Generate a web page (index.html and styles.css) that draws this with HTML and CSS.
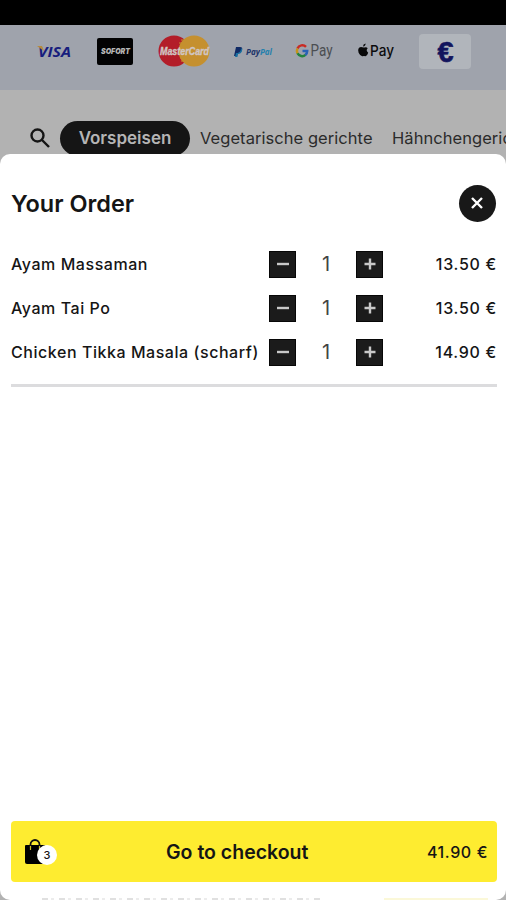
FILE: index.html
```html
<!DOCTYPE html>
<html lang="de">

<head>
    <meta charset="UTF-8">
    <meta name="viewport" content="width=device-width, initial-scale=1.0">
    <title>Your Order</title>
    <link rel="stylesheet" href="styles.css">
</head>

<body>
    <div class="status-bar"></div>

    <!-- Payment methods -->
    <div class="payments">
        <svg viewBox="0 0 506 65" width="506" height="65">
            <text class="visa" x="38" y="32" textLength="33" lengthAdjust="spacingAndGlyphs">VISA</text>
            <path d="M37 21h5l2 5z" fill="#b58a3c" />
            <rect x="97" y="13" width="36" height="27" rx="2" fill="#020203" />
            <text class="sofort" x="101" y="29" textLength="29" lengthAdjust="spacingAndGlyphs">SOFORT</text>
            <circle cx="174" cy="26" r="15.5" fill="#b31d29" />
            <circle cx="194" cy="26" r="15.5" fill="#c5902f" />
            <path d="M184 15h-3M184 18h-5M186 33h-6M185 36h-4" stroke="#c5902f" />
            <text class="master" x="160" y="30" textLength="49" lengthAdjust="spacingAndGlyphs">MasterCard</text>
            <path d="M236 22h4q3 0 2 3q-1 3-4 3l-1 3h-3z" fill="#102a65" />
            <path d="M241 23q2 1 1 3q-1 3-4 3l-.6 3h-2.400l1-4h2q3-1 3-5z" fill="#176fa0" />
            <text class="paypal" x="246" y="30" textLength="26" lengthAdjust="spacingAndGlyphs"><tspan fill="#203469">Pay</tspan><tspan fill="#2580ad">Pal</tspan></text>
            <g fill="none" stroke-width="2.5">
                <path d="M306 21.800a5.200 5.200 0 0 0-8.500 1.700" stroke="#c92b24" />
                <path d="M297.500 23.500a5.400 5.400 0 0 0 0 5" stroke="#c69318" />
                <path d="M297.500 28.300a5.200 5.200 0 0 0 8 1.600" stroke="#24833d" />
                <path d="M302.500 26h4.700q0 2.400-1.900 4" stroke="#2a62b5" />
            </g>
            <text class="gpay" x="310.500" y="31" textLength="22" lengthAdjust="spacingAndGlyphs">Pay</text>
            <path d="M364.500 23q2-1 3.200.8q-2.200 2 .5 4.500q-1.200 3.500-2.600 3.500q-1.600-.7-3.200 0q-2 .2-3.800-3.500q-1.500-5.300 2.400-5.700q1.800.6 3.500.400zM363 22q0-2.500 2.600-3q0 2.700-2.600 3z" transform="translate(0 -.5)" fill="#080809" />
            <text class="apay" x="370" y="31" textLength="24" lengthAdjust="spacingAndGlyphs">Pay</text>
            <rect x="419" y="9" width="52" height="35" rx="4" fill="#b1b5bb" />
            <text class="euro" x="437.500" y="36.500" textLength="16" lengthAdjust="spacingAndGlyphs">€</text>
        </svg>
    </div>

    <!-- Menu categories -->
    <nav class="categories">
        <svg class="search" viewBox="0 0 20 20" width="20" height="20">
            <circle cx="7.500" cy="7.500" r="6" />
            <path d="M12 12l7 7" />
        </svg>
        <a class="category active">Vorspeisen</a>
        <a class="category second">Vegetarische gerichte</a>
        <a class="category third">Hähnchengerichte</a>
    </nav>

    <!-- Order sheet -->
    <main class="sheet">
        <header class="sheet-header">
            <h1>Your Order</h1>
            <button class="close" aria-label="Close">
                <svg viewBox="0 0 12 12" width="12" height="12"><path d="M1 1l10 10M11 1L1 11" /></svg>
            </button>
        </header>

        <ul class="items">
            <li class="item">
                <span class="name">Ayam Massaman</span>
                <button class="step"><svg viewBox="0 0 12 12"><path d="M0 6h12" /></svg></button>
                <span class="count">1</span>
                <button class="step"><svg viewBox="0 0 12 12"><path d="M.5 6h11M6 .5v11" /></svg></button>
                <span class="price">13.50 €</span>
            </li>
            <li class="item">
                <span class="name">Ayam Tai Po</span>
                <button class="step"><svg viewBox="0 0 12 12"><path d="M0 6h12" /></svg></button>
                <span class="count">1</span>
                <button class="step"><svg viewBox="0 0 12 12"><path d="M.5 6h11M6 .5v11" /></svg></button>
                <span class="price">13.50 €</span>
            </li>
            <li class="item">
                <span class="name">Chicken Tikka Masala (scharf)</span>
                <button class="step"><svg viewBox="0 0 12 12"><path d="M0 6h12" /></svg></button>
                <span class="count">1</span>
                <button class="step"><svg viewBox="0 0 12 12"><path d="M.5 6h11M6 .5v11" /></svg></button>
                <span class="price">14.90 €</span>
            </li>
        </ul>

        <button class="checkout">
            <span class="bag">
                <svg viewBox="0 0 21 26" width="21" height="26">
                    <path d="M1 6h18q1 0 1 1v17q0 1-1 1H2q-2 0-2-2V7q0-1 1-1z" />
                    <path class="handle" d="M5.500 9V5.500a4.500 4.500 0 0 1 9 0V9" />
                    <path class="shine" d="M5.500 7v4M14.500 7v4" />
                </svg>
                <span class="badge">3</span>
            </span>
            <span class="checkout-label">Go to checkout</span>
            <span class="total">41.90 €</span>
        </button>

        <!-- Top edge of the page content below the sheet -->
        <div class="page-edge">
            <span class="edge-text"></span>
            <span class="edge-strip"></span>
        </div>
    </main>
</body>

</html>
```

FILE: styles.css
```css
* {
    box-sizing: border-box;
}

body {
    margin: 0;
    height: 900px;
    overflow: hidden;
    display: flex;
    flex-direction: column;
    background-color: #b2b2b2;
    color: #151515;
    font-family: Inter, "Liberation Sans", sans-serif;
}

button {
    border: none;
    padding: 0;
    color: inherit;
    font-family: inherit;
}

.status-bar {
    height: 25px;
    flex: none;
    background-color: #000;
}

.payments {
    height: 65px;
    flex: none;
    background-color: #9fa3ac;
}

.payments svg {
    display: block;
}

.visa {
    font: italic bold 15px "Open Sans", sans-serif;
    fill: #171d7d;
}

.sofort {
    font: italic 900 8px Inter, sans-serif;
    fill: #b5b5b5;
}

.master {
    font: italic bold 11px "Liberation Sans", sans-serif;
    fill: #d0c6c4;
    stroke: #d0c6c4;
    stroke-width: 0.4;
}

.paypal {
    font: italic bold 8px "Open Sans", sans-serif;
}

.gpay {
    font: 16px Roboto, sans-serif;
    fill: #4b4e52;
}

.apay {
    font: 500 15px Inter, sans-serif;
    fill: #0b0b0c;
}

.euro {
    font: bold 30px "Liberation Sans", sans-serif;
    fill: #12145d;
    stroke: #12145d;
    stroke-width: 0.6;
}

.categories {
    height: 64px;
    flex: none;
    padding: 31px 0 0 30px;
    display: flex;
    white-space: nowrap;
    overflow: hidden;
}

.search {
    margin-top: 7px;
    flex: none;
    fill: none;
    stroke: #151515;
    stroke-width: 2.4;
}

.category {
    flex: none;
    height: 35px;
    line-height: 35px;
    font-size: 16.5px;
    color: #2b2b2b;
}

.active {
    width: 130px;
    margin-left: 10px;
    border-radius: 18px;
    background-color: #151515;
    color: #b5b5b5;
    font-size: 17px;
    font-weight: 600;
    text-align: center;
}

.second {
    width: 192px;
    margin-left: 10px;
    letter-spacing: 0.05px;
}

.third {
    letter-spacing: 0.05px;
}

.sheet {
    flex: 1;
    display: flex;
    flex-direction: column;
    padding: 30px 9px 0 11px;
    border-radius: 10px;
    background-color: #fff;
    overflow: hidden;
}

.sheet-header {
    display: flex;
    justify-content: space-between;
    align-items: center;
    height: 38px;
    padding-right: 1px;
}

h1 {
    margin: 0;
    font-size: 23.5px;
    font-weight: 600;
}

.close {
    width: 37px;
    height: 37px;
    border-radius: 50%;
    background-color: #181818;
    display: flex;
    align-items: center;
    justify-content: center;
}

.close svg {
    stroke: #fff;
    stroke-width: 2.4;
    margin-right: 1px;
}

.items {
    list-style: none;
    margin: 20px 0 0;
    padding: 0 0 10px;
    border-bottom: 3px solid #dcdcde;
}

.item {
    height: 44px;
    display: flex;
    align-items: center;
    font-size: 16px;
    font-weight: 500;
    white-space: nowrap;
}

.name {
    width: 258px;
    flex: none;
    letter-spacing: 0.55px;
}

.step {
    width: 27px;
    height: 27px;
    flex: none;
    background-color: #1b1b1b;
    border: 1px solid #070707;
    display: flex;
    align-items: center;
    justify-content: center;
}

.step svg {
    width: 12px;
    height: 12px;
    stroke: #c8c8c8;
    stroke-width: 2.4;
}

.count {
    width: 60px;
    font-size: 20px;
    font-weight: 400;
    color: #444;
    text-align: center;
}

.price {
    margin-left: auto;
    letter-spacing: 0.7px;
}

.checkout {
    width: 486px;
    height: 61px;
    flex: none;
    margin-top: auto;
    padding: 0 9px 0 14px;
    border-radius: 4px;
    background-color: #feec30;
    display: flex;
    align-items: center;
    font-size: 16px;
    font-weight: 500;
}

.bag {
    position: relative;
    width: 32px;
    height: 26px;
}

.bag svg {
    display: block;
}

.handle {
    fill: none;
    stroke: #111;
    stroke-width: 1.8;
}

.shine {
    stroke: #c9bb28;
    stroke-width: 1.2;
}

.badge {
    position: absolute;
    left: 12px;
    top: 6px;
    width: 20px;
    height: 20px;
    border-radius: 50%;
    background-color: #fff;
    font-size: 11px;
    line-height: 20px;
    text-align: center;
}

.checkout-label {
    margin-left: 109px;
    font-size: 19.5px;
    font-weight: 600;
}

.total {
    margin-left: auto;
    letter-spacing: 0.6px;
}

.page-edge {
    height: 18px;
    flex: none;
    display: flex;
    align-items: flex-end;
    justify-content: space-between;
    padding: 0 9px 0 31px;
}

.edge-text {
    width: 278px;
    height: 2px;
    background: repeating-linear-gradient(90deg, #e0e0e0 0 6px, #fff 6px 9px, #ececec 9px 12px, #fff 12px 17px);
}

.edge-strip {
    width: 104px;
    height: 2px;
    background-color: #fbf8d8;
}
```
